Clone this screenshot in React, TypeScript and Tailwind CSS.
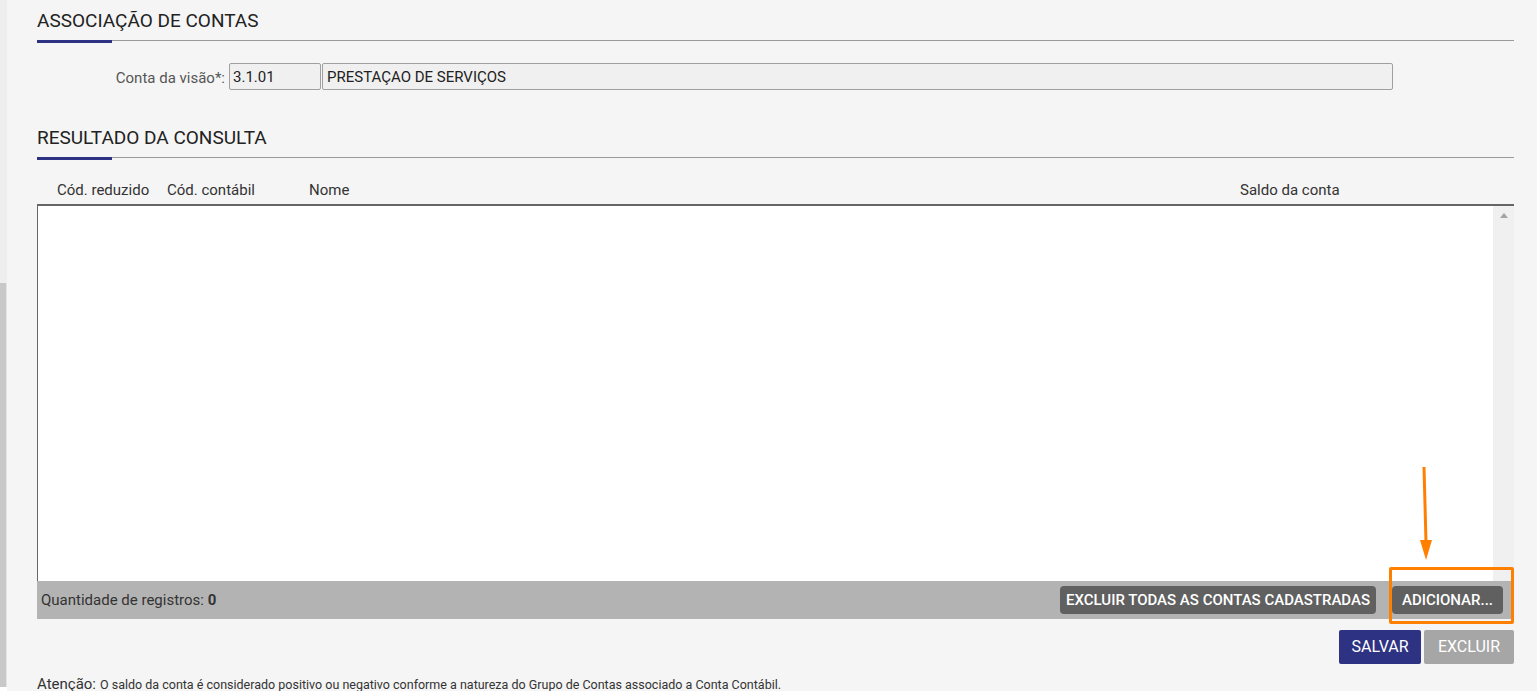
import React from "react";

const font = { fontFamily: "Roboto, 'Liberation Sans', sans-serif" };

function SectionTitle({ children }: { children: React.ReactNode }) {
  return (
    <div className="flex flex-col">
      <h2 className="text-[19px] leading-[25px] text-[#222] h-[25px]">{children}</h2>
      <div className="mt-[7px] border-t border-[#9a9a9a]">
        <div className="w-[75px] h-[3px] -mt-px bg-[#2d3282]" />
      </div>
    </div>
  );
}

export default function App() {
  return (
    <div className="flex h-[691px] w-[1537px] overflow-hidden bg-white" style={font}>
      {/* left strip */}
      <div className="w-[7px] flex flex-col">
        <div className="h-[283px] bg-[#eeeeee]" />
        <div className="h-[404px] bg-[#c8c8c8] border-r border-[#e4e4e4]" />
        <div className="flex-1 bg-white" />
      </div>

      <main className="relative flex-1 bg-[#f5f5f5] pl-[30px] pr-[23px] pt-[8px] text-[#333]">
        <SectionTitle>ASSOCIAÇÃO DE CONTAS</SectionTitle>

        <div className="mt-[20px] flex items-center">
          <label className="w-[188px] text-right text-[15px] leading-[20px] pt-[2px] text-[#555]">Conta da visão*:</label>
          <div className="ml-[4px] w-[92px] h-[27px] flex items-center px-[3px] pt-px bg-[#f0f0f0] border border-[#a0a0a0] rounded-[2px] text-[15px] text-[#222]">
            3.1.01
          </div>
          <div className="ml-px w-[1071px] h-[27px] flex items-center px-[4px] pt-px bg-[#f0f0f0] border border-[#a0a0a0] rounded-[2px] text-[15px] text-[#222]">
            PRESTAÇAO DE SERVIÇOS
          </div>
        </div>

        <div className="mt-[35px]">
          <SectionTitle>RESULTADO DA CONSULTA</SectionTitle>
        </div>

        {/* column headers */}
        <div className="mt-[20px] h-[20px] flex items-center text-[15px] text-[#333] pl-[20px]">
          <span className="w-[110px]">Cód. reduzido</span>
          <span className="w-[142px]">Cód. contábil</span>
          <span className="w-[931px]">Nome</span>
          <span>Saldo da conta</span>
        </div>

        {/* table body */}
        <div className="mt-[4px] h-[377px] flex bg-white border-t-2 border-[#666] border-l border-[#9a9a9a]">
          <div className="flex-1" />
          <div className="w-[21px] bg-[#f0f0f0] flex justify-center pt-[7px]">
            <div className="w-0 h-0 border-l-[4px] border-r-[4px] border-b-[5px] border-l-transparent border-r-transparent border-b-[#a3a3a3]" />
          </div>
        </div>

        {/* footer bar */}
        <div className="h-[38px] bg-[#b3b3b3] flex items-center pl-[4px] pr-[11px]">
          <span className="text-[15px] text-[#333]">
            Quantidade de registros: <b className="font-bold">0</b>
          </span>
          <div className="ml-auto flex gap-[16px]">
            <button className="h-[28px] w-[316px] rounded-[4px] bg-[#606060] text-white text-[15px] font-medium">
              EXCLUIR TODAS AS CONTAS CADASTRADAS
            </button>
            <button className="h-[28px] w-[111px] rounded-[4px] bg-[#606060] text-white text-[15px] font-medium">
              ADICIONAR...
            </button>
          </div>
        </div>

        <div className="mt-[11px] flex justify-end gap-[3px]">
          <button className="h-[34px] w-[82px] rounded-[2px] bg-[#2d3282] text-white text-[16px]">SALVAR</button>
          <button className="h-[34px] w-[90px] rounded-[2px] bg-[#a6a6a6] text-white text-[16px]">EXCLUIR</button>
        </div>

        <p className="mt-[11px] text-[#333] leading-[18px] whitespace-nowrap">
          <span className="text-[15px]">Atenção:</span>{" "}
          <span className="text-[12.5px]">
            O saldo da conta é considerado positivo ou negativo conforme a natureza do Grupo de Contas associado a Conta Contábil.
          </span>
        </p>

        {/* annotation overlay */}
        <div className="absolute left-[1382px] top-[567px] w-[125px] h-[57px] border-[3px] border-[#ff8000] rounded-[2px]" />
        <svg className="absolute left-[1403px] top-[464px]" width="30" height="100" viewBox="0 0 30 100">
          <line x1="14" y1="3" x2="16" y2="78" stroke="#ff8000" strokeWidth="3" />
          <polygon points="10,76 22,76 16,96" fill="#ff8000" />
        </svg>
      </main>
    </div>
  );
}
